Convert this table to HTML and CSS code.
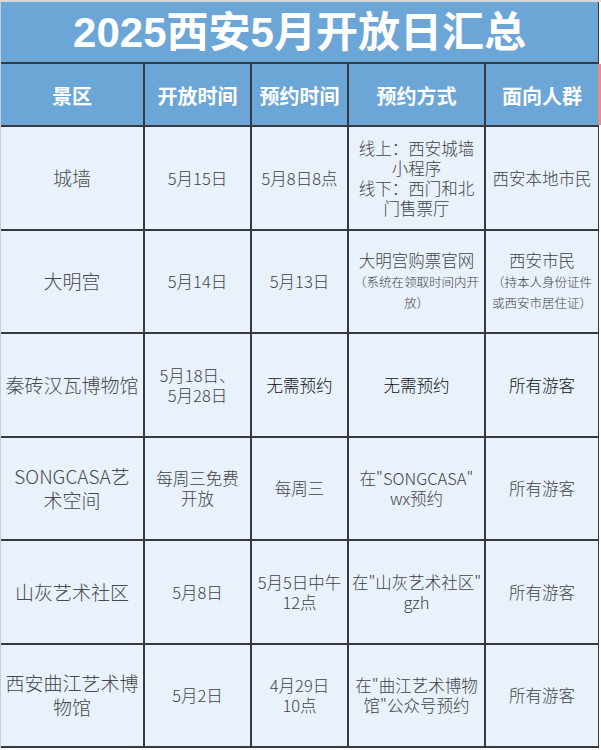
FILE: index.html
```html
<!DOCTYPE html>
<html lang="zh-CN">
<head>
<meta charset="utf-8">
<title>2025西安5月开放日汇总</title>
<link rel="stylesheet" href="styles.css">
</head>
<body>
<div class="page">
  <div class="sheet">
    <div class="title">2025西安5月开放日汇总</div>

    <div class="head">景区</div>
    <div class="head">开放时间</div>
    <div class="head">预约时间</div>
    <div class="head">预约方式</div>
    <div class="head last">面向人群</div>

    <div class="cell name"><div class="txt">城墙</div></div>
    <div class="cell"><div class="txt">5月15日</div></div>
    <div class="cell"><div class="txt">5月8日8点</div></div>
    <div class="cell"><div class="txt">线上：西安城墙<br>小程序<br>线下：西门和北<br>门售票厅</div></div>
    <div class="cell"><div class="txt">西安本地市民</div></div>

    <div class="cell name"><div class="txt">大明宫</div></div>
    <div class="cell"><div class="txt">5月14日</div></div>
    <div class="cell"><div class="txt">5月13日</div></div>
    <div class="cell"><div class="txt">大明宫购票官网<br><span class="note">（系统在领取时间内开<br>放）</span></div></div>
    <div class="cell"><div class="txt">西安市民<br><span class="note">（持本人身份证件<br>或西安市居住证）</span></div></div>

    <div class="cell name"><div class="txt">秦砖汉瓦博物馆</div></div>
    <div class="cell"><div class="txt">5月18日、<br>5月28日</div></div>
    <div class="cell dark"><div class="txt">无需预约</div></div>
    <div class="cell dark"><div class="txt">无需预约</div></div>
    <div class="cell dark"><div class="txt">所有游客</div></div>

    <div class="cell name"><div class="txt">SONGCASA艺<br>术空间</div></div>
    <div class="cell"><div class="txt">每周三免费<br>开放</div></div>
    <div class="cell"><div class="txt">每周三</div></div>
    <div class="cell"><div class="txt">在&quot;SONGCASA&quot;<br>wx预约</div></div>
    <div class="cell"><div class="txt">所有游客</div></div>

    <div class="cell name"><div class="txt">山灰艺术社区</div></div>
    <div class="cell"><div class="txt">5月8日</div></div>
    <div class="cell"><div class="txt">5月5日中午<br>12点</div></div>
    <div class="cell"><div class="txt">在&quot;山灰艺术社区&quot;<br>gzh</div></div>
    <div class="cell"><div class="txt">所有游客</div></div>

    <div class="cell name"><div class="txt">西安曲江艺术博<br>物馆</div></div>
    <div class="cell"><div class="txt">5月2日</div></div>
    <div class="cell"><div class="txt">4月29日<br>10点</div></div>
    <div class="cell"><div class="txt">在&quot;曲江艺术博物<br>馆&quot;公众号预约</div></div>
    <div class="cell"><div class="txt">所有游客</div></div>
  </div>
</div>
</body>
</html>
```

FILE: styles.css
```css
html, body {
  margin: 0;
  padding: 0;
  background: #ffffff;
}

.page {
  width: 601px;
  height: 750px;
  overflow: hidden;
  background: #ffffff;
  border-top: 2px solid #d6d9dd;
  box-sizing: border-box;
}

.sheet {
  width: 599px;
  box-sizing: border-box;
  border-left: 1px solid #c9ccd0;
  background: #363a3e;
  padding: 0 2px 2px 0;
  display: grid;
  grid-template-columns: 142px 105px 95px 135px 112px;
  grid-template-rows: 60px 61px repeat(6, 101.5px);
  gap: 2px;
  font-family: "Noto Sans CJK SC", "Noto Sans", sans-serif;
}

.title {
  grid-column: 1 / -1;
  background: #6ca6d7;
  color: #ffffff;
  font-family: "Liberation Sans", "Noto Sans CJK SC", sans-serif;
  font-weight: 700;
  font-size: 42px;
  line-height: 1;
  display: flex;
  align-items: center;
  justify-content: center;
  padding-top: 2px;
}

.head {
  background: #6ca6d7;
  color: #ffffff;
  font-weight: 700;
  font-size: 20px;
  display: flex;
  align-items: center;
  justify-content: center;
  padding-top: 2px;
}

.head.last {
  box-shadow: 4px 0 0 #e48b8b;
}

.cell {
  background: #e9f1fa;
  color: #3f4347;
  font-size: 16.5px;
  font-weight: 300;
  line-height: 20px;
  white-space: nowrap;
  text-align: center;
  display: flex;
  align-items: center;
  justify-content: center;
}

.txt {
  text-align: center;
}

.cell.name {
  font-size: 19px;
  line-height: 24px;
  color: #45494d;
}

.cell.dark {
  color: #0f1112;
}

.note {
  font-size: 12.5px;
  line-height: 19px;
}
```
